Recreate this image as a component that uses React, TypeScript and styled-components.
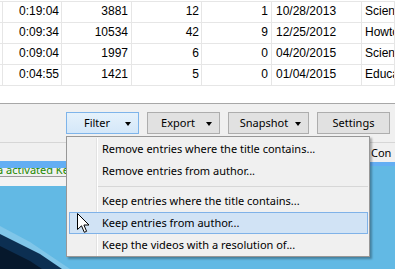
import React from 'react';
import styled, { createGlobalStyle } from 'styled-components';

const GlobalStyle = createGlobalStyle`
  html, body {
    margin: 0;
    padding: 0;
    overflow: hidden;
    background: #ffffff;
  }
`;

const Screen = styled.div`
  position: relative;
  width: 395px;
  height: 269px;
  overflow: hidden;
  display: flex;
  flex-direction: column;
  font-family: 'Noto Sans', 'Open Sans', sans-serif;
  font-size: 11px;
  color: #000;
`;

const TableArea = styled.div`
  height: 103px;
  flex-shrink: 0;
  background: #ffffff;
  padding-top: 1px;
  box-sizing: border-box;
`;

const Row = styled.div`
  display: grid;
  grid-template-columns: 2px 60px 70px 70px 70px 90px 1fr;
  height: 20px;
  border-top: 1px solid #e6e6e6;
  font-family: 'Liberation Sans', Arial, sans-serif;
  font-size: 12px;
  line-height: 19px;
`;

const LastLine = styled.div`
  border-top: 1px solid #e6e6e6;
`;

const Cell = styled.div<{ $align?: 'left' | 'right'; $pad?: number }>`
  border-right: 1px solid #e6e6e6;
  text-align: ${(p) => p.$align || 'right'};
  padding: ${(p) => (p.$align === 'left' ? `0 0 0 ${p.$pad ?? 4}px` : `0 ${p.$pad ?? 2}px 0 0`)};
  white-space: nowrap;
  overflow: hidden;
`;

const BottomBar = styled.div`
  position: relative;
  flex-shrink: 0;
  height: 38px;
  box-sizing: border-box;
  border-top: 1px solid #a7a7a7;
  background: #f0f0f0;
  display: flex;
  justify-content: flex-end;
  align-items: flex-start;
  gap: 8px;
  padding: 8px 5px 0 0;
  height: 39px;
`;

const Button = styled.div<{ $width: number; $active?: boolean }>`
  width: ${(p) => p.$width}px;
  height: 22px;
  box-sizing: border-box;
  display: flex;
  align-items: center;
  border: 1px solid ${(p) => (p.$active ? '#7eb4ea' : '#adadad')};
  background: ${(p) => (p.$active ? 'linear-gradient(#e5f1fb, #d4e7f9)' : '#e1e1e1')};
`;

const ButtonLabel = styled.span<{ $shift?: number }>`
  flex: 1;
  text-align: center;
  padding-left: ${(p) => p.$shift ?? 0}px;
  line-height: 20px;
`;

const Arrow = styled.span`
  width: 0;
  height: 0;
  border-left: 3.5px solid transparent;
  border-right: 3.5px solid transparent;
  border-top: 4px solid #000;
  margin: 1px 7px 0 0;
`;

const StatusArea = styled.div`
  display: grid;
  grid-template-columns: 370px 1fr;
  height: 44px;
  flex-shrink: 0;
  box-sizing: border-box;
  border-top: 1px solid #d6d6d6;
`;

const StatusLeft = styled.div`
  display: flex;
  flex-direction: column;
  background: #f0f0f0;
`;

const Spacer = styled.div<{ $h: number }>`
  height: ${(p) => p.$h}px;
  flex-shrink: 0;
`;

const ProgressBar = styled.div<{ $h: number }>`
  height: ${(p) => p.$h}px;
  background: #63aef3;
  flex-shrink: 0;
`;

const StatusText = styled.div`
  height: 8px;
  overflow: hidden;
  color: #1d8a00;
  font-size: 11px;
  line-height: 12px;
  white-space: nowrap;
  & > span {
    display: block;
    margin-top: -4px;
    margin-left: -3px;
  }
`;

const FrameEdge = styled.div`
  flex: 1;
  border-top: 1px solid #9a9a9a;
  background: #f3f3f3;
`;

const StatusRight = styled.div`
  display: flex;
  flex-direction: column;
`;

const ConLabel = styled.div`
  background: #f0f0f0;
  height: 19px;
  padding: 3px 0 0 1px;
  box-sizing: border-box;
  line-height: 14px;
  white-space: nowrap;
`;

const Desktop = styled.div`
  position: relative;
  flex: 1;
  background: #62b9e4;
`;

const RightDesktop = styled.div`
  flex: 1;
  background: #62b9e4;
`;

const Wallpaper = styled.svg`
  position: absolute;
  left: 0;
  top: 0;
`;

const Menu = styled.div`
  position: absolute;
  left: 66px;
  top: 32px;
  width: 304px;
  box-sizing: border-box;
  background: #f0f0f0;
  border: 1px solid #979797;
  padding: 1px 1px 0 1px;
  box-shadow: 2px 2px 2px rgba(0, 0, 0, 0.3);
  z-index: 5;
`;

const MenuInner = styled.div`
  position: relative;
  &::before {
    content: '';
    position: absolute;
    left: 28px;
    top: 0;
    bottom: 0;
    width: 1px;
    background: #e2e2e2;
    border-right: 1px solid #ffffff;
  }
`;

const MenuItem = styled.div<{ $hover?: boolean }>`
  position: relative;
  height: 22px;
  box-sizing: border-box;
  padding-left: 32px;
  line-height: 20px;
  white-space: nowrap;
  border: 1px solid ${(p) => (p.$hover ? '#7fb2e8' : 'transparent')};
  background: ${(p) => (p.$hover ? '#d1e3f5' : 'transparent')};
  margin-left: 1px;
`;

const Separator = styled.div`
  height: 8px;
  display: flex;
  align-items: center;
  padding-left: 29px;
  &::after {
    content: '';
    flex: 1;
    height: 1px;
    background: #d7d7d7;
  }
`;

const Cursor = styled.svg`
  position: absolute;
  left: 77px;
  top: 213px;
  z-index: 10;
`;

const rows = [
  ['0:19:04', '3881', '12', '1', '10/28/2013', 'Science'],
  ['0:09:34', '10534', '42', '9', '12/25/2012', 'Howto'],
  ['0:09:04', '1997', '6', '0', '04/20/2015', 'Science'],
  ['0:04:55', '1421', '5', '0', '01/04/2015', 'Education'],
];

const App: React.FC = () => {
  return (
    <Screen>
      <GlobalStyle />
      <TableArea>
        {rows.map((r) => (
          <Row key={r[0] + r[1]}>
            <Cell />
            <Cell $pad={2}>{r[0]}</Cell>
            <Cell $pad={3}>{r[1]}</Cell>
            <Cell $pad={2}>{r[2]}</Cell>
            <Cell $pad={3}>{r[3]}</Cell>
            <Cell $align="left" $pad={4}>{r[4]}</Cell>
            <Cell $align="left" $pad={3}>{r[5]}</Cell>
          </Row>
        ))}
        <LastLine />
      </TableArea>

      <BottomBar>
        <Button $width={73} $active>
          <ButtonLabel $shift={2}>Filter</ButtonLabel>
          <Arrow />
        </Button>
        <Button $width={73}>
          <ButtonLabel $shift={2}>Export</ButtonLabel>
          <Arrow />
        </Button>
        <Button $width={81}>
          <ButtonLabel $shift={4}>Snapshot</ButtonLabel>
          <Arrow />
        </Button>
        <Button $width={73}>
          <ButtonLabel>Settings</ButtonLabel>
        </Button>

        <Menu>
          <MenuInner>
            <MenuItem>Remove entries where the title contains...</MenuItem>
            <MenuItem>Remove entries from author...</MenuItem>
            <Separator />
            <MenuItem>Keep entries where the title contains...</MenuItem>
            <MenuItem $hover>Keep entries from author...</MenuItem>
            <MenuItem>Keep the videos with a resolution of...</MenuItem>
          </MenuInner>
        </Menu>
      </BottomBar>

      <StatusArea>
        <StatusLeft>
          <Spacer $h={18} />
          <ProgressBar $h={7} />
          <StatusText>
            <span>a activated Keywords</span>
          </StatusText>
          <FrameEdge />
        </StatusLeft>
        <StatusRight>
          <ConLabel>Con</ConLabel>
          <ProgressBar $h={4} />
          <RightDesktop />
        </StatusRight>
      </StatusArea>

      <Desktop>
        <Wallpaper width="395" height="83" viewBox="0 0 395 83">
          <polygon points="0,40 30,56 70,83 0,83" fill="#9ed3ee" opacity="0.5" />
          <polygon points="0,48 40,68 62,83 0,83" fill="#0c2f52" />
          <polygon points="0,60 30,75 42,83 0,83" fill="#06182c" />
        </Wallpaper>
      </Desktop>

      <Cursor width="14" height="21" viewBox="0 0 14 21">
        <path
          d="M0.5 0.5 L0.5 16.5 L4.5 12.8 L7.3 19.3 L9.6 18.3 L6.9 12 L12 12 Z"
          fill="#ffffff"
          stroke="#000000"
          strokeWidth="1"
          strokeLinejoin="miter"
        />
      </Cursor>
    </Screen>
  );
};

export default App;
